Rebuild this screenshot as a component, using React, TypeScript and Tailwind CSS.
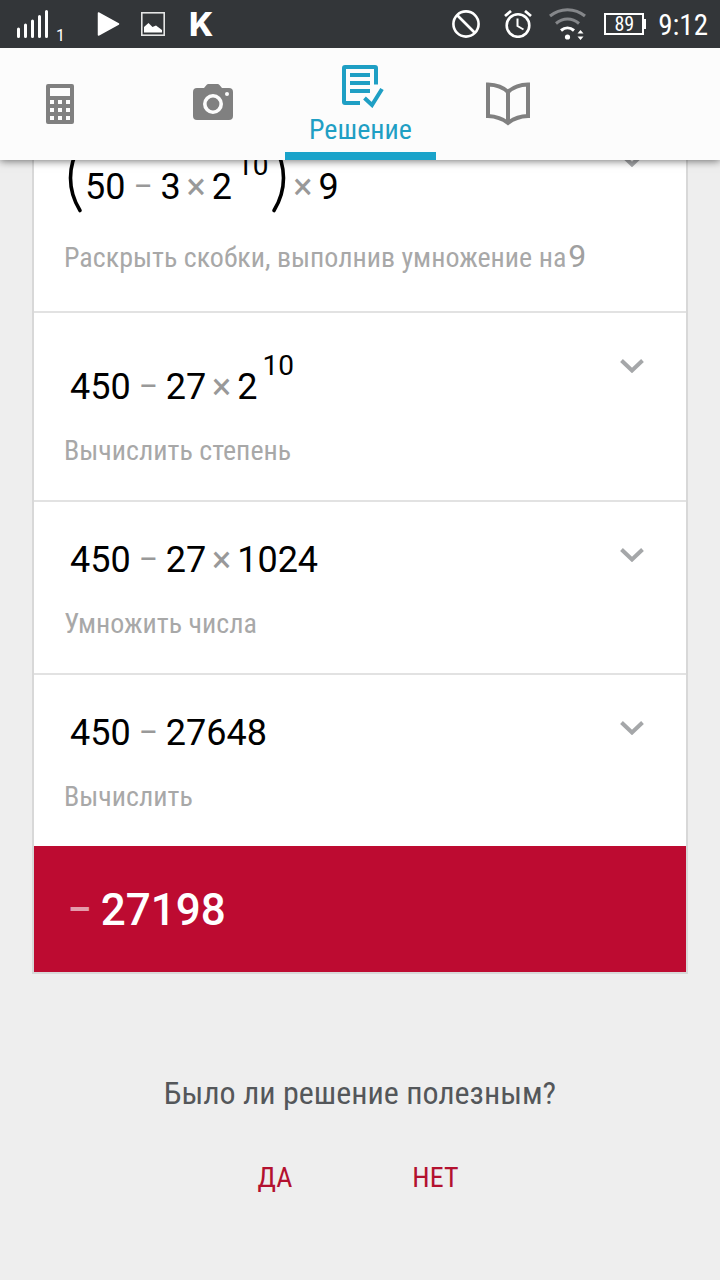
import React from 'react';

type Token =
  | { kind: 'num'; text: string }
  | { kind: 'sup'; text: string }
  | { kind: 'minus' }
  | { kind: 'times' }
  | { kind: 'open' }
  | { kind: 'close' };

const num = (text: string): Token => ({ kind: 'num', text });
const sup = (text: string): Token => ({ kind: 'sup', text });
const minus: Token = { kind: 'minus' };
const times: Token = { kind: 'times' };

const steps: { tokens: Token[]; hint: string; hintValue?: string }[] = [
  {
    tokens: [{ kind: 'open' }, num('50'), minus, num('3'), times, num('2'), sup('10'), { kind: 'close' }, times, num('9')],
    hint: 'Раскрыть скобки, выполнив умножение на',
    hintValue: '9',
  },
  { tokens: [num('450'), minus, num('27'), times, num('2'), sup('10')], hint: 'Вычислить степень' },
  { tokens: [num('450'), minus, num('27'), times, num('1024')], hint: 'Умножить числа' },
  { tokens: [num('450'), minus, num('27648')], hint: 'Вычислить' },
];

const MathToken: React.FC<{ token: Token }> = ({ token }) => {
  switch (token.kind) {
    case 'num':
      return <span>{token.text}</span>;
    case 'sup':
      return <sup className="static mb-[26px] ml-[5px] align-baseline text-[28px] leading-[34px]">{token.text}</sup>;
    case 'minus':
      return <span className="w-[35px] text-center text-[28px] font-medium text-[#999999]">–</span>;
    case 'times':
      return <span className="w-[31px] text-center text-[#999999]">×</span>;
    case 'open':
      return (
        <svg className="-mb-1 -ml-px mr-0.5 h-[70px] w-4" viewBox="0 0 16 70" fill="none" stroke="#000" strokeWidth="3.6" strokeLinecap="round">
          <path d="M13 2.5C6.500 13 3.500 24 3.500 35C3.500 46 6.500 57 13 67.500" />
        </svg>
      );
    case 'close':
      return (
        <svg className="-mb-1 ml-[3px] h-[70px] w-4" viewBox="0 0 16 70" fill="none" stroke="#000" strokeWidth="3.6" strokeLinecap="round">
          <path d="M3 2.5C9.500 13 12.500 24 12.500 35C12.500 46 9.500 57 3 67.500" />
        </svg>
      );
  }
};

const Step: React.FC<{ step: (typeof steps)[number] }> = ({ step }) => {
  const hasParens = step.tokens.some((t) => t.kind === 'open');
  return (
    <li className={`flex items-start justify-between border-t-2 border-[#e2e2e2] px-[30px] pt-9 ${hasParens ? 'pb-[35px]' : 'pb-[31px]'}`}>
      <div>
        <div className={`flex items-end text-[36px] leading-[44px] text-black ${hasParens ? 'pb-1 pl-1' : 'pl-1.5'}`}>
          {step.tokens.map((token, i) => (
            <MathToken key={i} token={token} />
          ))}
        </div>
        <p className="mt-6 font-['Roboto_Condensed',Roboto,sans-serif] text-[28px] leading-9 text-[#a8a8a8]">
          {step.hint}
          {step.hintValue && (
            <span className="ml-0.5 font-[Roboto,sans-serif] text-[32px] leading-[38px] text-[#a0a0a0]">{step.hintValue}</span>
          )}
        </p>
      </div>
      <button type="button" aria-label="Подробнее" className="-mt-[7px] flex size-12 shrink-0 items-center justify-center">
        <svg className="h-3.5 w-6" viewBox="0 0 24 14" fill="none" stroke="#a5a7a9" strokeWidth="4">
          <path d="M1.500 1.500L12 11.500L22.500 1.500" />
        </svg>
      </button>
    </li>
  );
};

const StatusBar = () => (
  <div className="flex h-12 items-center justify-between bg-[#333639] pr-3 pl-4 text-white">
    <div className="flex items-center">
      <svg className="h-8 w-9" viewBox="0 0 36 32" stroke="#fff" strokeWidth="3" strokeLinecap="round">
        <path d="M2.500 21V28.500M9.500 17V28.500M16.500 13V28.500M23.500 8.500V28.500M30.500 3.500V28.500" />
      </svg>
      <span className="mt-6 ml-1 text-base leading-5">1</span>
      <svg className="ml-8 size-6" viewBox="0 0 24 24" fill="#fff" stroke="#fff" strokeWidth="1.500" strokeLinejoin="round">
        <path d="M1.500 1L21.500 12L1.500 23Z" />
      </svg>
      <svg className="ml-5 size-6" viewBox="0 0 24 24">
        <rect x="0.800" y="0.800" width="22.400" height="22.400" fill="none" stroke="#e4e5e5" strokeWidth="1.600" />
        <path fill="#fff" d="M3 20.500V15L7.500 11L11.500 15L15 13.500L21 18V20.500Z" />
      </svg>
      <span className="ml-6 font-[Inter,sans-serif] text-[33px] leading-8 font-extrabold">K</span>
    </div>

    <div className="flex items-center">
      <svg className="size-7" viewBox="0 0 28 28" fill="none" stroke="#fff" strokeWidth="2.600">
        <circle cx="14" cy="14" r="12.600" />
        <path d="M5 5L23 23" />
      </svg>
      <svg className="ml-6 size-7" viewBox="0 0 28 28" fill="none" stroke="#fff" strokeWidth="2.600">
        <circle cx="14" cy="15.500" r="11.300" />
        <path d="M13.500 8.500V16L19.500 19.500" strokeWidth="2" />
        <path d="M1 6L7 1M21 1L27 6" strokeWidth="2.800" />
      </svg>
      <svg className="ml-4 h-8 w-10" viewBox="0 0 40 32" fill="none">
        <path d="M2 8C12 -0.500 27 -0.500 37 8" stroke="#85878a" strokeWidth="3" />
        <path d="M8 15.500C15 9.500 24 9.500 31 15.500" stroke="#85878a" strokeWidth="3" />
        <path d="M13 22.500C17 19 22 19 26 22.500" stroke="#fff" strokeWidth="3" />
        <circle cx="19.500" cy="29" r="2.600" fill="#fff" />
        <path d="M29.500 25.500L32.500 22L35.500 25.500ZM29.500 28.500L32.500 32L35.500 28.500Z" fill="#fff" />
      </svg>
      <div className="ml-4 flex items-center">
        <div className="flex h-[22px] w-10 items-center justify-center border-2 border-white font-['Roboto_Condensed',Roboto,sans-serif] text-xl leading-5">
          89
        </div>
        <div className="h-2.5 w-0.5 bg-white" />
      </div>
      <span className="ml-3 pt-0.5 font-['Roboto_Condensed',Roboto,sans-serif] text-[29px] leading-9">9:12</span>
    </div>
  </div>
);

const Tabs = () => (
  <nav className="flex h-28 bg-[#fcfcfc] text-[#808080]">
    <button type="button" aria-label="Калькулятор" className="mr-[21px] flex w-30 items-center justify-center">
      <svg className="h-10 w-7" viewBox="0 0 28 40" fill="currentColor" fillRule="evenodd">
        <path d="M2 0H26Q28 0 28 2V38Q28 40 26 40H2Q0 40 0 38V2Q0 0 2 0ZM4 4V12H24V4ZM4 16V20H8V16ZM12 16V20H16V16ZM20 16V20H24V16ZM4 24V28H8V24ZM12 24V28H16V24ZM20 24V28H24V24ZM4 32V36H8V32ZM12 32V36H16V32ZM20 32V36H24V32Z" />
      </svg>
    </button>
    <button type="button" aria-label="Камера" className="flex w-36 items-center justify-center pb-1">
      <svg className="h-9 w-10" viewBox="0 0 40 36">
        <path fill="currentColor" d="M4 4H11L13.500 1Q14.200 0 15.500 0H24.500Q25.800 0 26.500 1L29 4H36Q40 4 40 8V32Q40 36 36 36H4Q0 36 0 32V8Q0 4 4 4Z" />
        <circle cx="20" cy="20" r="8.200" fill="none" stroke="#fcfcfc" strokeWidth="3.600" />
        <circle cx="34" cy="10" r="2" fill="#fcfcfc" />
      </svg>
    </button>
    <button type="button" className="flex w-[151px] flex-col items-center border-b-8 border-[#1aa3ca] pt-4 text-[#1f9fc4]">
      <svg className="ml-1 h-11 w-[42px]" viewBox="0 0 42 44" fill="none" stroke="currentColor" strokeWidth="4">
        <path d="M34 20.500V4Q34 3 33 3H3Q2 3 2 4V38Q2 39 3 39H18" />
        <path d="M8 11H28M8 19H28M8 27H28" />
        <path d="M22.500 34L30 41L40 25" />
      </svg>
      <span className="mt-1 font-['Roboto_Condensed',Roboto,sans-serif] text-[28px] leading-9">Решение</span>
    </button>
    <button type="button" aria-label="Справка" className="flex w-36 items-center justify-center">
      <svg className="size-11" viewBox="0 0 44 44" fill="none" stroke="currentColor" strokeWidth="4">
        <path d="M2 2.500Q15 3 22 10Q29 3 42 2.500V34Q30 34.500 22 41Q14 34.500 2 34ZM22 10V41" />
      </svg>
    </button>
  </nav>
);

const App: React.FC = () => {
  return (
    <div className="min-h-screen overflow-x-hidden bg-[#eeeeee] font-[Roboto,sans-serif]">
      <header className="sticky top-0 z-10 shadow-[0_1px_8px_rgba(0,0,0,0.55)]">
        <StatusBar />
        <Tabs />
      </header>

      {/* The list is scrolled, its first step sits partly under the header */}
      <main className="-mt-[55px] px-8 pb-8">
        <section className="border-x-2 border-b-2 border-[#d8d8d8] bg-white">
          <ol>
            {steps.map((step, i) => (
              <Step key={i} step={step} />
            ))}
          </ol>
          <div className="flex h-[126px] items-center bg-[#bd0b31] px-[34px] pt-0.5 text-[44px] font-medium text-white">
            <span className="mr-2.5 text-[36px] font-bold text-white/60">–</span>
            <span>27198</span>
          </div>
        </section>

        <section className="mt-[99px] flex flex-col items-center font-['Roboto_Condensed',Roboto,sans-serif]">
          <h2 className="text-[32px] leading-10 text-[#54575a]">Было ли решение полезным?</h2>
          <div className="mt-[39px] flex gap-18 pr-1 text-[28px] leading-9 text-[#b3112f]">
            <button type="button" className="px-6 py-2">ДА</button>
            <button type="button" className="px-6 py-2">НЕТ</button>
          </div>
        </section>
      </main>
    </div>
  );
};

export default App;
